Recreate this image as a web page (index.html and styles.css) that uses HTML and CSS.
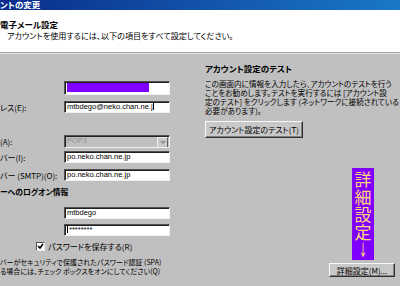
FILE: index.html
```html
<!DOCTYPE html>
<html>
<head>
    <title>アカウントの変更</title>
    <meta charset="UTF-8">
    <link rel="stylesheet" href="styles.css">
</head>
<body>
    <div class="window">
        <div class="titlebar">ントの変更</div>

        <div class="header">
            <div class="header-title">電子メール設定</div>
            <div class="header-sub">アカウントを使用するには、以下の項目をすべて設定してください。</div>
        </div>

        <div class="main">
            <div class="left">
                <div class="row row-name">
                    <span class="label"></span>
                    <div class="field"><div class="fill" style="width: 80%"></div></div>
                </div>
                <div class="row row-mail">
                    <span class="label">レス(E):</span>
                    <div class="field">mtbdego@neko.chan.ne.j<span class="caret"></span></div>
                </div>

                <div class="row row-type">
                    <span class="label">(A):</span>
                    <div class="field disabled">
                        POP3
                        <span class="drop">
                            <svg width="6" height="4" viewBox="0 0 6 4"><path d="M0 0h6L3 3z" fill="#909090"/></svg>
                        </span>
                    </div>
                </div>
                <div class="row row-in">
                    <span class="label">バー(I):</span>
                    <div class="field">po.neko.chan.ne.jp</div>
                </div>
                <div class="row row-out">
                    <span class="label">バー (SMTP)(O):</span>
                    <div class="field">po.neko.chan.ne.jp</div>
                </div>

                <div class="group-title">ーへのログオン情報</div>
                <div class="row row-user">
                    <span class="label"></span>
                    <div class="field">mtbdego</div>
                </div>
                <div class="row row-pass">
                    <span class="label"></span>
                    <div class="field"><span class="caret first"></span>********</div>
                </div>

                <label class="check">
                    <span class="box">
                        <svg width="7" height="7" viewBox="0 0 7 7"><path d="M1 3l2 2 3-4" stroke="#000" stroke-width="1.6" fill="none"/></svg>
                    </span>
                    パスワードを保存する(R)
                </label>

                <div class="note">
                    <div>バーがセキュリティで保護されたパスワード認証 (SPA)</div>
                    <div>る場合には、チェック ボックスをオンにしてください(Q)</div>
                </div>
            </div>

            <div class="right">
                <div class="test-title">アカウント設定のテスト</div>
                <div class="test-text">
                    <div>この画面内に情報を入力したら、アカウントのテストを行う</div>
                    <div>ことをお勧めします。テストを実行するには [アカウント設</div>
                    <div>定のテスト] をクリックします (ネットワークに接続されている</div>
                    <div>必要があります)。</div>
                </div>
                <button class="btn btn-test">アカウント設定のテスト(T)</button>

                <div class="corner">
                    <div class="banner">詳細設定<span class="arrow">↓</span></div>
                    <button class="btn btn-more">詳細設定(M)...</button>
                </div>
            </div>
        </div>
    </div>
</body>
</html>
```

FILE: styles.css
```css
body {
    margin: 0;
    font-family: "Noto Sans CJK JP", "Liberation Sans", sans-serif;
    font-size: 8px;
    color: #000;
    background: #c0c0c0;
}
.window {
    width: 400px;
    height: 286px;
    overflow: hidden;
    display: flex;
    flex-direction: column;
}
.titlebar {
    height: 10px;
    line-height: 9px;
    background: linear-gradient(to right, #0a2d8c, #1a78c8);
    color: #fff;
    font-weight: bold;
    font-size: 8.5px;
    font-feature-settings: "palt";
    white-space: nowrap;
}
.header {
    height: 43px;
    box-sizing: border-box;
    background: #fff;
    border-bottom: 1px solid #a0a0a0;
    box-shadow: 0 1px 0 #e8e8e8;
    padding-top: 8px;
}
.header-title {
    font-weight: bold;
    font-size: 8.5px;
    line-height: 12px;
    font-feature-settings: "palt";
}
.header-sub {
    padding-left: 7px;
    margin-top: 1px;
    line-height: 10px;
    font-size: 8.1px;
    font-feature-settings: "palt";
    white-space: nowrap;
}
.main {
    flex: 1;
    display: flex;
    min-height: 0;
}
.left {
    flex: none;
    width: 190px;
    padding-top: 28px;
}
.row {
    display: flex;
    align-items: center;
    height: 12px;
}
.label {
    width: 64px;
    flex: none;
    font-feature-settings: "palt";
    white-space: nowrap;
}
.field {
    width: 106px;
    height: 12px;
    box-sizing: border-box;
    background: #fff;
    border: 1px solid;
    border-color: #505050 #f0f0f0 #f0f0f0 #505050;
    box-shadow: inset 1px 1px 0 #202020;
    font-family: "Liberation Sans", sans-serif;
    font-size: 7.5px;
    line-height: 10px;
    padding-left: 2px;
    position: relative;
    white-space: nowrap;
    overflow: hidden;
}
.row-name { height: 14px; }
.row-name .field { height: 14px; }
.fill {
    height: 9px;
    margin-top: 1px;
    background: #8000ff;
}
.caret {
    display: inline-block;
    width: 1px;
    height: 8px;
    background: #000;
    vertical-align: -1px;
}
.caret.first { margin-right: 1px; }
.field.disabled {
    background: #c0c0c0;
    color: #909090;
    height: 13px;
}
.drop {
    position: absolute;
    right: 1px;
    top: 1px;
    width: 9px;
    height: 9px;
    background: #c8c8c8;
    border: 1px solid;
    border-color: #f0f0f0 #606060 #606060 #f0f0f0;
    display: flex;
    align-items: center;
    justify-content: center;
}
.row-mail { margin-top: 6px; }
.row-type { margin-top: 22px; height: 13px; }
.row-in { margin-top: 3px; }
.row-out { margin-top: 6px; }
.row-user { margin-top: 9px; }
.row-pass { margin-top: 5px; }
.group-title {
    margin-top: 5px;
    font-weight: bold;
    font-size: 7.8px;
    line-height: 12px;
    font-feature-settings: "palt";
    white-space: nowrap;
}
.check {
    display: flex;
    align-items: center;
    margin-top: 5px;
    padding-left: 36px;
    height: 10px;
    font-feature-settings: "palt";
    white-space: nowrap;
}
.box {
    width: 9px;
    height: 9px;
    box-sizing: border-box;
    background: #fff;
    border: 1px solid;
    border-color: #505050 #f0f0f0 #f0f0f0 #505050;
    margin-right: 3px;
    display: flex;
    align-items: center;
    justify-content: center;
}
.note {
    margin-top: 7px;
    font-size: 7px;
    line-height: 9px;
    font-feature-settings: "palt";
    white-space: nowrap;
}
.right {
    flex: 1;
    min-width: 0;
    padding-left: 15px;
    padding-top: 9px;
    display: flex;
    flex-direction: column;
    align-items: flex-start;
}
.test-title {
    font-weight: bold;
    font-size: 8.5px;
    line-height: 12px;
    font-feature-settings: "palt";
}
.test-text {
    margin-top: 5px;
    font-size: 7.6px;
    line-height: 9px;
    font-feature-settings: "palt";
    white-space: nowrap;
}
.btn {
    font-family: "Noto Sans CJK JP", "Liberation Sans", sans-serif;
    font-size: 8px;
    font-feature-settings: "palt";
    background: #c8c8c8;
    border: 1px solid;
    border-color: #f8f8f8 #303030 #303030 #f8f8f8;
    box-shadow: inset -1px -1px 0 #808080;
    padding: 0;
    color: #000;
    white-space: nowrap;
}
.btn-test {
    margin-top: 6px;
    width: 98px;
    height: 17px;
}
.corner {
    margin-top: auto;
    align-self: stretch;
    display: flex;
    flex-direction: column;
    align-items: flex-end;
    padding-bottom: 9px;
    padding-right: 5px;
}
.banner {
    width: 22px;
    height: 92px;
    margin-right: 21px;
    background: #8000ff;
    color: #ffd878;
    font-size: 17px;
    line-height: 17.5px;
    text-align: center;
    word-break: break-all;
    padding-top: 2px;
    box-sizing: border-box;
}
.arrow {
    display: block;
    font-family: "DejaVu Sans", sans-serif;
    font-size: 15px;
    line-height: 16px;
    transform: scaleX(0.6) scaleY(1.3);
    transform-origin: top;
}
.btn-more {
    margin-top: 3px;
    width: 66px;
    height: 14px;
}
```
